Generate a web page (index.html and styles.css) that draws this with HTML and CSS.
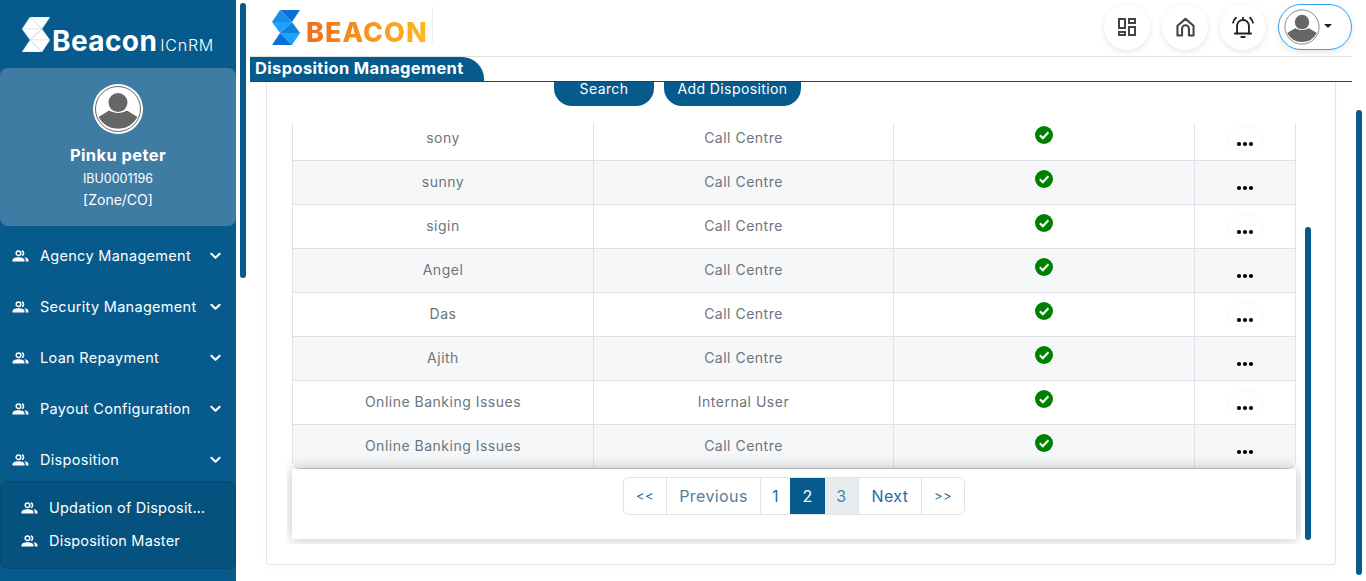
FILE: index.html

```html
<!DOCTYPE html>
<html lang="en">
<head>
  <meta charset="UTF-8">
  <title>Beacon ICnRM - Disposition Management</title>
  <link rel="stylesheet" href="styles.css">
</head>
<body>

<svg class="defs" width="0" height="0">
  <symbol id="people" viewBox="0 0 17 12">
    <circle cx="6.500" cy="3.200" r="2.300" fill="none" stroke="currentColor" stroke-width="1.500"/>
    <path d="M10 .8a2.600 2.600 0 0 1 0 4.800" fill="none" stroke="currentColor" stroke-width="1.500"/>
    <path d="M.5 11.500v-1.200C.5 8.300 3 7.200 6.500 7.200s6 1.100 6 3.100v1.200z" fill="currentColor"/>
    <path d="M12.300 7.300c2.500.2 4.200 1.200 4.200 3v1.200h-2.700v-1.200c0-1.200-.5-2.200-1.500-3z" fill="currentColor"/>
  </symbol>
  <symbol id="chevron" viewBox="0 0 12 8">
    <path d="M1.500 1.500 6 6l4.500-4.500" fill="none" stroke="currentColor" stroke-width="2.200" stroke-linecap="round" stroke-linejoin="round"/>
  </symbol>
  <symbol id="avatar" viewBox="0 0 50 50">
    <circle cx="25" cy="25" r="25" fill="#fff"/>
    <circle cx="25" cy="25" r="22.500" fill="#fff" stroke="#666" stroke-width="1"/>
    <circle cx="25" cy="18.500" r="9.500" fill="#666"/>
    <path d="M5.500 33 16 26.500c5.500 3.200 12.500 3.200 18 0L44.500 33A22 22 0 0 1 5.500 33z" fill="#666"/>
  </symbol>
  <symbol id="check" viewBox="0 0 18 18">
    <circle cx="9" cy="9" r="9" fill="#008000"/>
    <path d="M4.800 9.300 7.800 12.200 13.400 6.200" fill="none" stroke="#fff" stroke-width="2"/>
  </symbol>
  <symbol id="dots" viewBox="0 0 36 25">
    <circle cx="12" cy="18" r="2.100" fill="#000"/>
    <circle cx="18" cy="18" r="2.100" fill="#000"/>
    <circle cx="24" cy="18" r="2.100" fill="#000"/>
  </symbol>
  <symbol id="mark" viewBox="0 0 28 35">
    <polygon class="m1" points="8,0 28,0 20,12"/>
    <polygon class="m2" points="8,0 20,12 0,12"/>
    <polygon class="m3" points="0,12 20,12 8,23"/>
    <polygon class="m4" points="20,12 28,23 8,23"/>
    <polygon class="m5" points="8,23 28,23 20,35"/>
    <polygon class="m6" points="8,23 20,35 0,35"/>
  </symbol>
</svg>

<aside class="sidebar">
  <div class="brand">
    <svg class="brand-mark" width="28" height="35"><use href="#mark"/></svg>
    <span class="brand-name">Beacon</span>
    <span class="brand-sub">ICnRM</span>
  </div>

  <div class="profile">
    <svg class="profile-pic" width="50" height="50"><use href="#avatar"/></svg>
    <div class="profile-name">Pinku peter</div>
    <div class="profile-id">IBU0001196</div>
    <div class="profile-role">[Zone/CO]</div>
  </div>

  <nav class="menu">
    <div class="menu-item">
      <svg class="menu-icon" width="17" height="12"><use href="#people"/></svg>
      <span class="menu-text">Agency Management</span>
      <svg class="menu-arrow" width="11" height="8"><use href="#chevron"/></svg>
    </div>
    <div class="menu-item">
      <svg class="menu-icon" width="17" height="12"><use href="#people"/></svg>
      <span class="menu-text">Security Management</span>
      <svg class="menu-arrow" width="11" height="8"><use href="#chevron"/></svg>
    </div>
    <div class="menu-item">
      <svg class="menu-icon" width="17" height="12"><use href="#people"/></svg>
      <span class="menu-text">Loan Repayment</span>
      <svg class="menu-arrow" width="11" height="8"><use href="#chevron"/></svg>
    </div>
    <div class="menu-item">
      <svg class="menu-icon" width="17" height="12"><use href="#people"/></svg>
      <span class="menu-text">Payout Configuration</span>
      <svg class="menu-arrow" width="11" height="8"><use href="#chevron"/></svg>
    </div>
    <div class="menu-item">
      <svg class="menu-icon" width="17" height="12"><use href="#people"/></svg>
      <span class="menu-text">Disposition</span>
      <svg class="menu-arrow" width="11" height="8"><use href="#chevron"/></svg>
    </div>
    <div class="submenu">
      <div class="submenu-item">
        <svg class="menu-icon" width="17" height="12"><use href="#people"/></svg>
        <span class="submenu-text">Updation of Disposit…</span>
      </div>
      <div class="submenu-item">
        <svg class="menu-icon" width="17" height="12"><use href="#people"/></svg>
        <span class="submenu-text">Disposition Master</span>
      </div>
    </div>
  </nav>
</aside>

<div class="side-track"><div class="thumb side-thumb"></div></div>

<main class="main">
  <header class="topbar">
    <div class="logo">
      <svg class="logo-mark" width="28" height="35"><use href="#mark"/></svg>
      <span class="logo-text">BEACON</span>
    </div>
    <div class="top-actions">
      <button class="round-btn">
        <svg width="20" height="20" viewBox="0 0 20 20" fill="none" stroke="#444" stroke-width="2">
          <rect x="2" y="2" width="6" height="9"/>
          <rect x="12" y="2" width="6" height="4"/>
          <rect x="2" y="15" width="6" height="3"/>
          <rect x="12" y="10" width="6" height="8"/>
        </svg>
      </button>
      <button class="round-btn">
        <svg width="23" height="23" viewBox="0 0 20 20" fill="none" stroke="#444" stroke-width="1.800" stroke-linejoin="round">
          <path d="M3 17V8.500L10 2.500l7 6V17h-4v-6a3 3 0 0 0-6 0v6z"/>
        </svg>
      </button>
      <button class="round-btn">
        <svg width="26" height="26" viewBox="0 0 24 24" fill="none" stroke="#222" stroke-width="1.700" stroke-linecap="round">
          <path d="M6.500 18V11a5.500 5.500 0 0 1 11 0v7"/>
          <path d="M4.500 18h15"/>
          <path d="M10.500 21.200h3" stroke-width="2"/>
          <path d="M12 3.500V4.500"/>
          <path d="M5.500 3.500A9 9 0 0 0 2.800 8"/>
          <path d="M18.500 3.500A9 9 0 0 1 21.200 8"/>
        </svg>
      </button>
      <button class="user-btn">
        <svg width="38" height="38"><use href="#avatar"/></svg>
        <span class="caret"></span>
      </button>
    </div>
  </header>

  <div class="title-row">
    <h1 class="title-tab">Disposition Management</h1>
  </div>

  <section class="card">
    <div class="toolbar">
      <button class="pill-btn btn-search">Search</button>
      <button class="pill-btn btn-add">Add Disposition</button>
    </div>

    <div class="table-wrap">
      <table class="grid">
        <colgroup>
          <col class="col-name"><col class="col-type"><col class="col-active"><col class="col-menu">
        </colgroup>
        <tbody>
          <tr><td>sony</td><td>Call Centre</td><td><svg class="ok" width="18" height="18"><use href="#check"/></svg></td><td><span class="more"><svg width="36" height="25"><use href="#dots"/></svg></span></td></tr>
          <tr><td>sunny</td><td>Call Centre</td><td><svg class="ok" width="18" height="18"><use href="#check"/></svg></td><td><span class="more"><svg width="36" height="25"><use href="#dots"/></svg></span></td></tr>
          <tr><td>sigin</td><td>Call Centre</td><td><svg class="ok" width="18" height="18"><use href="#check"/></svg></td><td><span class="more"><svg width="36" height="25"><use href="#dots"/></svg></span></td></tr>
          <tr><td>Angel</td><td>Call Centre</td><td><svg class="ok" width="18" height="18"><use href="#check"/></svg></td><td><span class="more"><svg width="36" height="25"><use href="#dots"/></svg></span></td></tr>
          <tr><td>Das</td><td>Call Centre</td><td><svg class="ok" width="18" height="18"><use href="#check"/></svg></td><td><span class="more"><svg width="36" height="25"><use href="#dots"/></svg></span></td></tr>
          <tr><td>Ajith</td><td>Call Centre</td><td><svg class="ok" width="18" height="18"><use href="#check"/></svg></td><td><span class="more"><svg width="36" height="25"><use href="#dots"/></svg></span></td></tr>
          <tr><td>Online Banking Issues</td><td>Internal User</td><td><svg class="ok" width="18" height="18"><use href="#check"/></svg></td><td><span class="more"><svg width="36" height="25"><use href="#dots"/></svg></span></td></tr>
          <tr><td>Online Banking Issues</td><td>Call Centre</td><td><svg class="ok" width="18" height="18"><use href="#check"/></svg></td><td><span class="more"><svg width="36" height="25"><use href="#dots"/></svg></span></td></tr>
        </tbody>
      </table>
    </div>

    <div class="pager-box">
      <ul class="pager">
        <li class="pg pg-first">&lt;&lt;</li>
        <li class="pg pg-prev">Previous</li>
        <li class="pg pg-1">1</li>
        <li class="pg pg-2 active">2</li>
        <li class="pg pg-3 hover">3</li>
        <li class="pg pg-next">Next</li>
        <li class="pg pg-last">&gt;&gt;</li>
      </ul>
    </div>

    <div class="thumb card-thumb"></div>
  </section>
</main>

<div class="page-track"><div class="thumb page-thumb"></div></div>

</body>
</html>
```

FILE: styles.css

```css
* {
  box-sizing: border-box;
}
html, body {
  height: 100%;
}
body {
  margin: 0;
  display: flex;
  overflow: hidden;
  background: #fff;
  color: #6c757d;
  font-family: Inter, "Open Sans", sans-serif;
}
.defs {
  position: absolute;
}
button {
  font-family: inherit;
  cursor: pointer;
}
.m1 { fill: var(--m1); }
.m2 { fill: var(--m2); }
.m3 { fill: var(--m3); }
.m4 { fill: var(--m4); }
.m5 { fill: var(--m5); }
.m6 { fill: var(--m6); }

/* sidebar */
.sidebar {
  width: 236px;
  flex: none;
  background: #065a8c;
  color: #fff;
}
.brand {
  height: 68px;
  display: flex;
  align-items: flex-start;
  padding: 17px 0 0 22px;
}
.brand-mark {
  flex: none;
  --m1: #fff;
  --m2: #fff;
  --m3: #fff;
  --m4: #fff;
  --m5: #fff;
  --m6: #fff;
  stroke: #bcd3e3;
  stroke-width: 0.4;
}
.brand-name {
  margin: 7px 0 0 2px;
  font-size: 28px;
  line-height: 34px;
  font-weight: 700;
  letter-spacing: 0.4px;
}
.brand-sub {
  margin: 18px 0 0 3px;
  font-size: 16px;
  line-height: 20px;
  font-weight: 300;
  letter-spacing: 0.8px;
}
.profile {
  height: 158px;
  padding-top: 16px;
  background: #3f7ca3;
  border-radius: 8px;
  display: flex;
  flex-direction: column;
  align-items: center;
}
.profile-name {
  margin-top: 11px;
  font-size: 16.500px;
  line-height: 20px;
  font-weight: 700;
  letter-spacing: 0.4px;
}
.profile-id {
  margin-top: 5px;
  font-size: 12.500px;
  line-height: 18px;
}
.profile-role {
  margin-top: 2px;
  font-size: 14px;
  line-height: 20px;
}
.menu {
  padding-top: 4px;
}
.menu-item {
  height: 51px;
  display: flex;
  align-items: center;
  padding: 0 15px 0 12px;
}
.menu-icon {
  flex: none;
}
.menu-text {
  margin-left: 11px;
  flex: 1;
  font-size: 14.500px;
  letter-spacing: 0.3px;
  white-space: nowrap;
}
.submenu {
  height: 88px;
  margin-top: -4px;
  padding-top: 9px;
  background: #05527f;
  border: 1px solid #0a4a72;
  border-radius: 8px;
}
.submenu-item {
  height: 33px;
  display: flex;
  align-items: center;
  padding-left: 20px;
}
.submenu-text {
  margin-left: 11px;
  font-size: 14.500px;
  letter-spacing: 0.2px;
  white-space: nowrap;
}

/* scroll thumbs */
.thumb {
  width: 6px;
  background: #065a8c;
  border-radius: 3px;
}
.side-track {
  width: 14px;
  flex: none;
  padding: 3px 0 0 4px;
}
.side-thumb {
  height: 275px;
}
.page-track {
  width: 14px;
  flex: none;
  padding: 110px 0 0 4px;
}
.page-thumb {
  height: 465px;
}

/* header */
.main {
  width: 1102px;
  flex: none;
  display: flex;
  flex-direction: column;
}
.topbar {
  height: 57px;
  flex: none;
  display: flex;
  align-items: flex-start;
  justify-content: space-between;
  border-bottom: 1px solid #e2e2e2;
}
.logo {
  margin: 6px 0 0 22px;
  height: 37px;
  width: 161px;
  padding-top: 4px;
  display: flex;
  border-right: 1px solid #f0f0f0;
  --m1: #0b6fd6;
  --m2: #1590e6;
  --m3: #1fa2ff;
  --m4: #0d84d8;
  --m5: #1fa2ff;
  --m6: #0b6fd6;
}
.logo-mark {
  flex: none;
}
.logo-text {
  height: 32px;
  margin: 7px 0 0 6px;
  font-size: 27px;
  line-height: 32px;
  font-weight: 800;
  letter-spacing: 1px;
  background: linear-gradient(90deg, #ee6f1a, #ffb820);
  -webkit-background-clip: text;
  background-clip: text;
  color: transparent;
}
.top-actions {
  display: flex;
  gap: 12px;
  padding-top: 4px;
}
.round-btn {
  width: 46px;
  height: 46px;
  padding: 0;
  border: 0;
  border-radius: 50%;
  background: #fff;
  box-shadow: 0 2px 6px rgba(0, 0, 0, 0.1);
  display: flex;
  align-items: center;
  justify-content: center;
}
.user-btn {
  width: 74px;
  height: 46px;
  padding: 0 0 0 4px;
  border: 1px solid #2ea3f2;
  border-radius: 23px;
  background: #fff;
  box-shadow: 0 2px 6px rgba(0, 0, 0, 0.1);
  display: flex;
  align-items: center;
}
.caret {
  margin: -2px 0 0 3px;
  border-top: 4px solid #222;
  border-left: 4px solid transparent;
  border-right: 4px solid transparent;
}

/* title */
.title-row {
  height: 25px;
  flex: none;
  border-bottom: 1px solid #0a4a72;
  position: relative;
  z-index: 2;
}
.title-tab {
  width: 234px;
  height: 24px;
  margin: 0;
  padding-left: 5px;
  background: #065a8c;
  color: #fff;
  border-top-right-radius: 22px;
  font-size: 16.500px;
  line-height: 22px;
  font-weight: 700;
  letter-spacing: 0.35px;
  white-space: nowrap;
}

/* card */
.card {
  position: relative;
  width: 1070px;
  height: 483px;
  margin-left: 16px;
  padding: 0 25px;
  border: 1px solid #dfe5ec;
  border-top: 0;
  border-radius: 0 0 4px 4px;
  box-shadow: 0 4px 12px rgba(0, 0, 0, 0.015);
}
.toolbar {
  height: 24px;
  margin-bottom: 17px;
  padding-left: 262px;
  display: flex;
  gap: 10px;
}
.pill-btn {
  height: 24px;
  padding: 0 0 11px;
  border: 0;
  border-radius: 0 0 18px 18px;
  background: #065a8c;
  color: #fff;
  font-size: 14px;
  line-height: 13px;
  letter-spacing: 0.4px;
}
.btn-search {
  width: 100px;
}
.btn-add {
  width: 137px;
}

/* table */
.table-wrap {
  width: 1004px;
  height: 346px;
  overflow: hidden;
  border-radius: 0 0 9px 9px;
  border-bottom: 1px solid #c9ced3;
}
.grid {
  width: 1004px;
  margin-top: -7px;
  table-layout: fixed;
  border-collapse: collapse;
  font-size: 14px;
  letter-spacing: 0.5px;
}
.col-name { width: 301px; }
.col-type { width: 300px; }
.col-active { width: 301px; }
.grid td {
  height: 44px;
  padding: 0 0 2px;
  border: 1px solid #dee2e6;
  text-align: center;
  vertical-align: middle;
}
.grid tr:nth-child(even) td {
  background: #f6f7f9;
}
.ok {
  display: block;
  margin: -6px auto 0;
}
.more {
  display: block;
  width: 36px;
  height: 25px;
  margin: 2px auto 0;
  border: 1px solid #f6f6f6;
  border-radius: 50%;
  background: #fff;
}
.more svg {
  display: block;
  margin: -1px;
}
.grid tr:nth-child(even) .more {
  border-color: transparent;
  background: transparent;
}

/* pagination */
.pager-box {
  position: relative;
  width: 1004px;
  height: 70px;
  padding-top: 8px;
  background: #fff;
  box-shadow: 0 0 14px rgba(0, 0, 0, 0.25);
  clip-path: inset(-20px -5px -5px -5px);
}
.pager {
  width: 342px;
  height: 38px;
  margin: 0 0 0 331px;
  padding: 0;
  list-style: none;
  display: flex;
  border: 1px solid #dee2e6;
  border-radius: 6px;
  font-size: 16px;
  letter-spacing: 0.4px;
  overflow: hidden;
}
.pg {
  display: flex;
  align-items: center;
  justify-content: center;
  color: #1b6f9f;
  border-right: 1px solid #dee2e6;
}
.pg-first { width: 43px; font-size: 13px; }
.pg-prev { width: 94px; color: #4f7f9f; }
.pg-1 { width: 29px; border-right: 0; }
.pg-2 { width: 35px; border-right: 0; }
.pg-3 { width: 34px; color: #4f7f9f; }
.pg-next { width: 63px; }
.pg-last { width: 42px; border-right: 0; font-size: 13px; }
.active {
  background: #065a8c;
  color: #fff;
}
.hover {
  background: #e9ecef;
}
.card-thumb {
  position: absolute;
  left: 1038px;
  top: 145px;
  height: 313px;
}
```
